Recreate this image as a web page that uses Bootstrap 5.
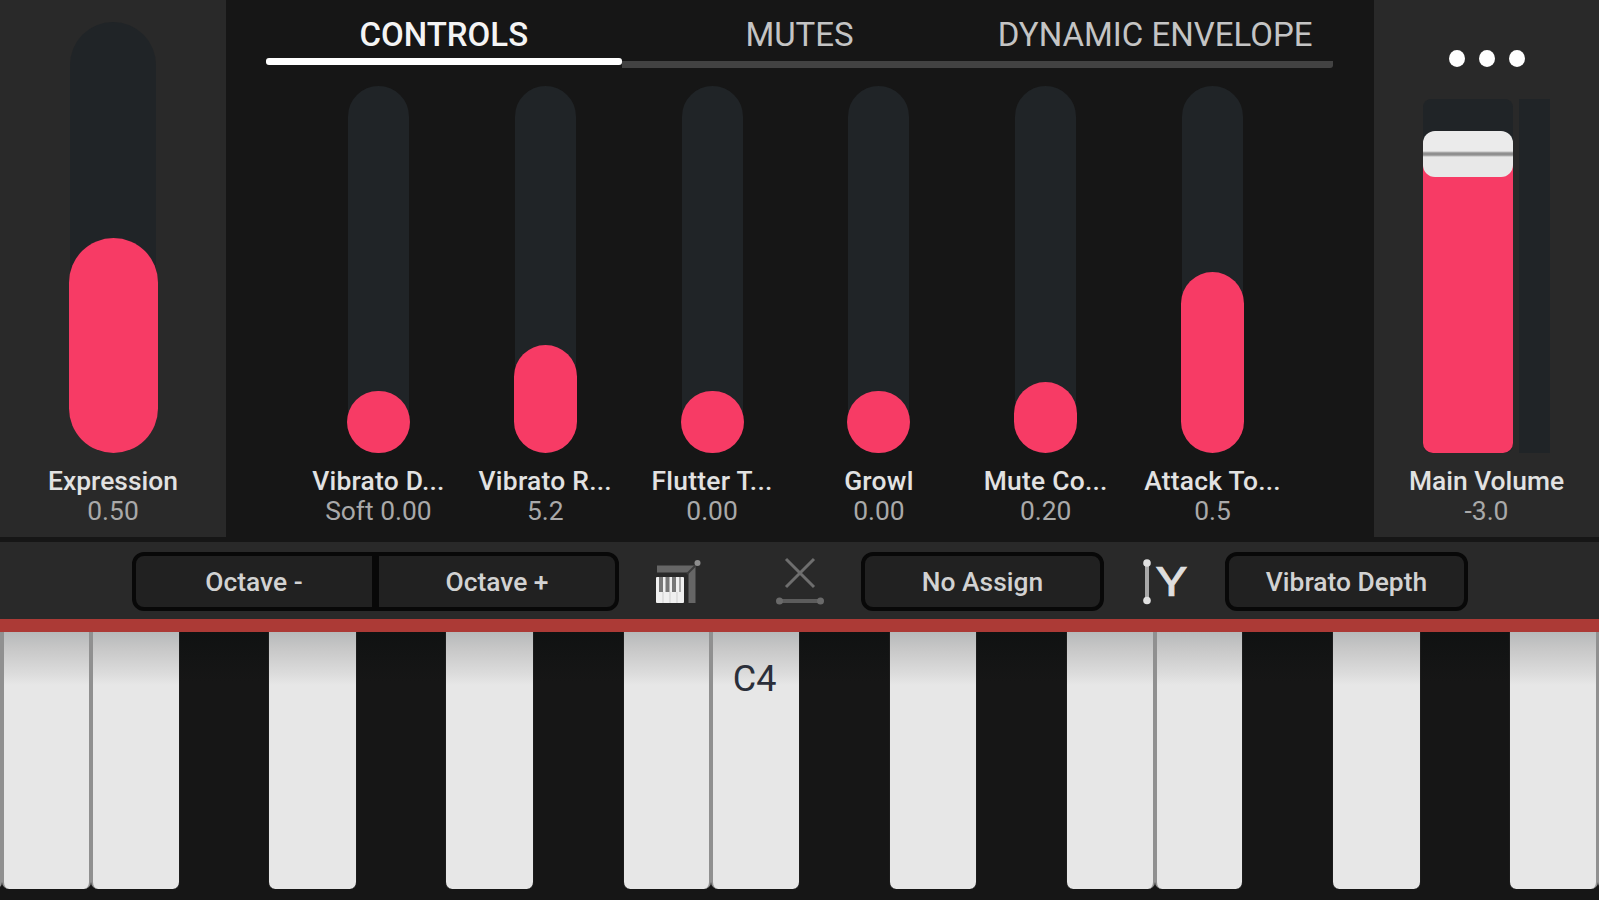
<!DOCTYPE html>
<html lang="en">
<head>
    <meta charset="UTF-8">
    <meta name="viewport" content="width=device-width, initial-scale=1.0">
    <title>Trumpet Instrument</title>
    <link rel="stylesheet" href="https://cdn.jsdelivr.net/npm/bootstrap@5.3.0/dist/css/bootstrap.min.css">
    <style>
        body {
            background: #161616;
            font-family: Roboto, "Liberation Sans", sans-serif;
            color: #dcdcdc;
        }
        .top-area { height: 537px; }
        .side-panel { background: #292929; }
        .side-left { width: 226px; padding-top: 22px; }
        .side-right { width: 225px; }

        /* Tabs */
        .tab-bar { margin: 11px 41px 0 40px; height: 57px; }
        .tab-bar .nav-link {
            height: 57px;
            padding: 0;
            border-radius: 0;
            font-size: 33px;
            line-height: 47px;
            color: #c4c4c4;
            white-space: nowrap;
            background: linear-gradient(#424242, #424242) 0 50px / 100% 7px no-repeat;
        }
        .tab-bar .nav-link.active {
            color: #f4f4f4;
            font-weight: 500;
            background: none;
        }
        .tab-bar .nav-link.active::after {
            content: "";
            display: block;
            height: 7px;
            border-radius: 3px;
            background: #fff;
        }
        .tab-bar .nav-item:last-child .nav-link { border-radius: 0 0 3px 0; }

        /* Sliders */
        .slider-row { padding: 18px 78px 0 69px; }
        .track { width: 61px; height: 367px; border-radius: 31px; background: #202427; }
        .fill { width: 63px; border-radius: 32px; background: #f73b65; flex: none; }
        .side-left .track { width: 86px; height: 431px; border-radius: 43px; }
        .side-left .fill { width: 89px; border-radius: 45px; }
        .slider-name {
            margin-top: 13px;
            font-size: 26.4px;
            line-height: 30px;
            font-weight: 500;
            color: #e2e2e2;
            white-space: nowrap;
        }
        .slider-row .slider-name { letter-spacing: .25px; }
        .slider-value { font-size: 26.4px; line-height: 31px; color: #a9a9a9; }

        /* Main volume */
        .more-btn { height: 99px; padding-top: 50px; gap: 14px; }
        .more-btn span { width: 16px; height: 17px; border-radius: 50%; background: #fff; }
        .volume { height: 354px; gap: 6px; margin-left: 49px; }
        .volume-track { width: 90px; border-radius: 8px; background: #202427; }
        .volume-fill { height: 289px; margin-top: -12px; border-radius: 0 0 10px 10px; background: #f73b65; }
        .volume-handle {
            height: 46px;
            margin-top: 32px;
            border-radius: 12px;
            background: linear-gradient(#ebebeb 20px, #8f8f8f 22px, #8f8f8f 24px, #e8e8e8 26px);
            z-index: 1;
        }
        .volume-meter { width: 31px; background: #202427; }

        /* Toolbar */
        .tool-bar { height: 77px; margin-top: 5px; padding: 10px 0 0 132px; background: #292929; }
        .tool-bar .btn {
            width: 243px;
            height: 59px;
            padding: 0;
            border: 4px solid #080808;
            border-radius: 12px;
            background: #212121;
            color: #d2d2d2;
            font-size: 26.4px;
            font-weight: 500;
            line-height: 53px;
        }
        .tool-bar .btn-group .btn { width: 244px; flex: none; }
        .tool-icon { flex: none; }
        .icon-piano { margin-left: 30px; }
        .icon-x { margin: 0 31px 0 61px; }
        .icon-y { margin: 0 33px 0 33px; }

        /* Keyboard */
        .keyboard { height: 281px; border-top: 13px solid #ac3a36; overflow: hidden; }
        .key-row { height: 257px; margin-left: -86.4px; }
        .piano-key { width: 88.65px; flex: none; background: linear-gradient(#101212, #161616 50px); }
        .key-white {
            border: solid #1c1c1c;
            border-width: 0 1px;
            border-radius: 0 0 7px 7px;
            background: linear-gradient(#b6b9ba, #c6c6c6 15px, #dcdcdc 42px, #e7e7e7 53px);
            font-size: 36px;
            line-height: 94px;
            color: #2b2f3a;
        }
        .key-white.join-right { border-right: 2px solid #909090; }
        .key-white.join-left { border-left: 2px solid #909090; }
        .key-label { margin-right: 3px; }
    </style>
</head>
<body class="vh-100 overflow-hidden d-flex flex-column">
    <div class="top-area d-flex">
        <!-- Expression -->
        <div class="side-panel side-left text-center" id="expression"></div>

        <div class="flex-fill">
            <ul class="nav nav-justified tab-bar flex-nowrap">
                <li class="nav-item col-4"><a class="nav-link active" href="#">CONTROLS</a></li>
                <li class="nav-item col-4"><a class="nav-link" href="#">MUTES</a></li>
                <li class="nav-item col-4"><a class="nav-link" href="#">DYNAMIC ENVELOPE</a></li>
            </ul>
            <div class="slider-row d-flex text-center" id="controls"></div>
        </div>

        <!-- Main Volume -->
        <div class="side-panel side-right text-center">
            <div class="more-btn d-flex justify-content-center"><span></span><span></span><span></span></div>
            <div class="volume d-flex">
                <div class="volume-track d-flex flex-column">
                    <div class="volume-handle"></div>
                    <div class="volume-fill"></div>
                </div>
                <div class="volume-meter"></div>
            </div>
            <div class="slider-name">Main Volume</div>
            <div class="slider-value">-3.0</div>
        </div>
    </div>

    <!-- Toolbar -->
    <div class="tool-bar d-flex align-items-start">
        <div class="btn-group">
            <button class="btn">Octave -</button>
            <button class="btn">Octave +</button>
        </div>
        <svg class="tool-icon icon-piano" width="60" height="60" viewBox="0 0 60 60">
            <path d="M8 17h35v34" fill="none" stroke="#666" stroke-width="7"/>
            <path d="M38 22l9-9" stroke="#3a3a3a" stroke-width="2"/>
            <circle cx="48.500" cy="11" r="3" fill="#8d8d8d"/>
            <rect x="7" y="25" width="28" height="26" rx="1" fill="#f0f0f0"/>
            <path d="M12 25v15M18.500 25v15M25 25v15" stroke="#777" stroke-width="4"/>
            <path d="M31 25v15" stroke="#aaa" stroke-width="2"/>
            <path d="M14 40v11M21 40v11M28 40v11" stroke="#cfcfcf" stroke-width="1"/>
        </svg>
        <svg class="tool-icon icon-x" width="60" height="60" viewBox="0 0 60 60">
            <path d="M16 7l28 28M44 7L16 35" stroke="#6e6e6e" stroke-width="3"/>
            <path d="M8 49h44" stroke="#5c5c5c" stroke-width="4"/>
            <circle cx="9.500" cy="49" r="3.500" fill="#6a6a6a"/>
            <circle cx="50.500" cy="49" r="3.500" fill="#6a6a6a"/>
        </svg>
        <button class="btn">No Assign</button>
        <svg class="tool-icon icon-y" width="55" height="60" viewBox="0 0 55 60">
            <path d="M10 11v38" stroke="#a8a8a8" stroke-width="4"/>
            <circle cx="10" cy="11" r="3.800" fill="#e0e0e0"/>
            <circle cx="10" cy="48.500" r="3.800" fill="#e0e0e0"/>
            <text x="19" y="43.500" font-size="41" fill="#dedede" stroke="#dedede" stroke-width=".7" textLength="31" lengthAdjust="spacingAndGlyphs">Y</text>
        </svg>
        <button class="btn">Vibrato Depth</button>
    </div>

    <div class="keyboard">
        <div class="key-row d-flex text-center" id="keys"></div>
    </div>

    <script src="https://cdn.jsdelivr.net/npm/bootstrap@5.3.0/dist/js/bootstrap.bundle.min.js"></script>
    <script>
        const controls = [
            { name: "Vibrato D...", value: "Soft 0.00", height: 62 },
            { name: "Vibrato R...", value: "5.2", height: 108 },
            { name: "Flutter T...", value: "0.00", height: 62 },
            { name: "Growl", value: "0.00", height: 62 },
            { name: "Mute Co...", value: "0.20", height: 71 },
            { name: "Attack To...", value: "0.5", height: 181 }
        ];

        function sliderHtml(item) {
            return `
                <div class="d-flex flex-column align-items-center w-100">
                    <div class="track d-flex align-items-end justify-content-center">
                        <div class="fill" style="height: ${item.height}px"></div>
                    </div>
                    <div class="slider-name">${item.name}</div>
                    <div class="slider-value">${item.value}</div>
                </div>`;
        }

        document.getElementById("expression").innerHTML = sliderHtml({ name: "Expression", value: "0.50", height: 215 });
        document.getElementById("controls").innerHTML = controls.map(sliderHtml).join("");

        // w = white key, b = black key
        const layout = "wwwbwbwbwwbwbwwbwbww";
        let keyContent = "";
        for (let i = 0; i < layout.length; i++) {
            let cls = "piano-key";
            if (layout[i] === "w") {
                cls += " key-white";
                if (layout[i + 1] === "w") cls += " join-right";
                if (layout[i - 1] === "w") cls += " join-left";
            }
            keyContent += `<div class="${cls}">${i === 9 ? '<span class="key-label">C4</span>' : ""}</div>`;
        }
        document.getElementById("keys").innerHTML = keyContent;
    </script>
</body>
</html>
